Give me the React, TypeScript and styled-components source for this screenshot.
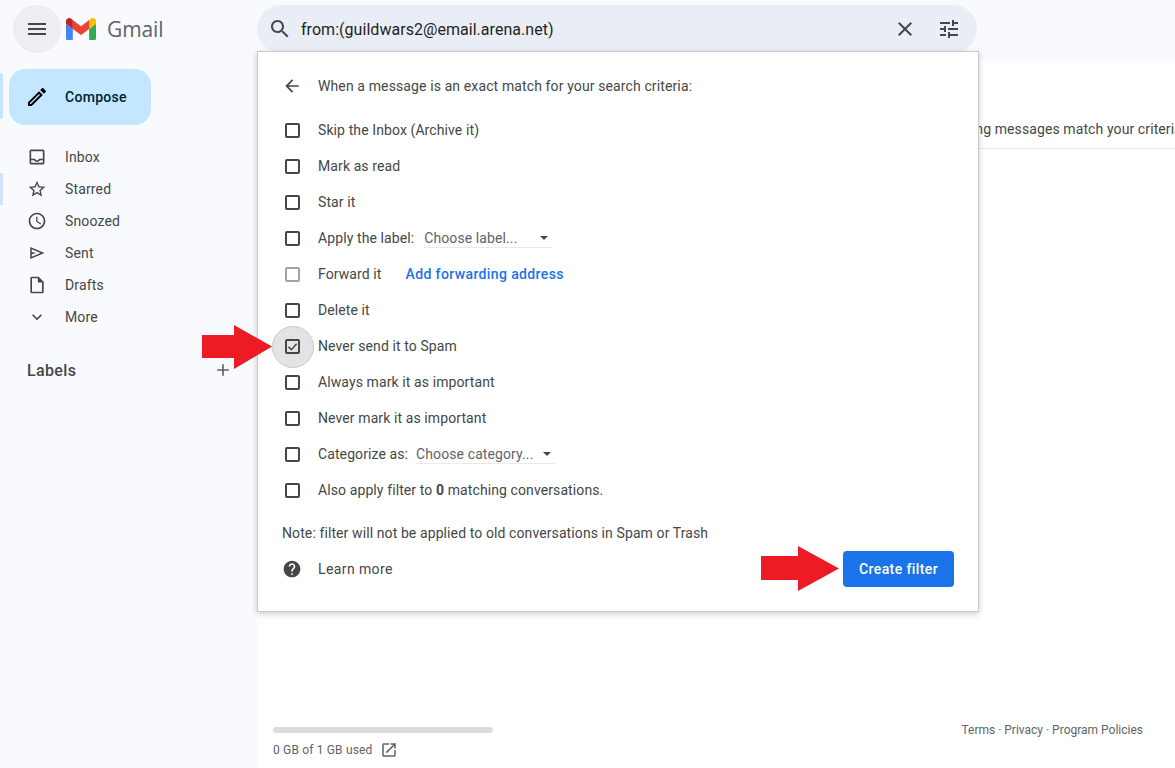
import React from "react";
import styled, { createGlobalStyle } from "styled-components";

const Global = createGlobalStyle`
  html, body { margin: 0; padding: 0; height: 100%; background: #f8fafd; }
  * { box-sizing: border-box; }
  body { font-family: Roboto, "Liberation Sans", Arial, sans-serif; font-size: 14px; letter-spacing: 0.1px; color: #444746; overflow: hidden; }
`;

const Page = styled.div`
  position: relative;
  width: 100%;
  height: 768px;
  display: flex;
  flex-direction: column;
  overflow: hidden;
  background: #f8fafd;
`;
const Header = styled.header`
  height: 61px;
  flex: none;
  display: flex;
  align-items: flex-start;
  padding: 5px 0 0 13px;
`;
const MenuButton = styled.div`
  width: 48px;
  height: 48px;
  border-radius: 50%;
  background: #eceef1;
  display: flex;
  align-items: center;
  justify-content: center;
  color: #444746;
`;
const Brand = styled.div`
  width: 196px;
  height: 48px;
  padding-left: 5px;
  display: flex;
  align-items: center;
  gap: 11px;
`;
const BrandName = styled.span`
  font-family: "Open Sans", Roboto, sans-serif;
  font-size: 21px;
  color: #5f6368;
  letter-spacing: -0.1px;
`;
const SearchBar = styled.div`
  width: 720px;
  height: 48px;
  border-radius: 24px;
  background: #e9eef6;
  display: flex;
  align-items: center;
  padding: 0 16px 0 11px;
  color: #444746;
`;
const SearchText = styled.span`
  flex: 1;
  margin-left: 9px;
  font-size: 16px;
  letter-spacing: 0.04px;
  color: #1f1f1f;
`;
const SearchAction = styled.span`
  width: 24px;
  height: 24px;
  margin-left: 20px;
  display: flex;
`;
const Body = styled.div`
  flex: 1;
  display: flex;
  min-height: 0;
`;
const Sidebar = styled.nav`
  position: relative;
  width: 257px;
  flex: none;
  padding-top: 8px;
`;
const ComposeButton = styled.div`
  position: relative;
  margin-left: 9px;
  width: 142px;
  height: 56px;
  border-radius: 16px;
  background: #c2e7ff;
  display: flex;
  align-items: center;
  padding-left: 16px;
  gap: 16px;
  font-weight: 500;
  letter-spacing: 0.3px;
  color: #001d35;
  &::before {
    content: "";
    position: absolute;
    left: -9px;
    top: 4px;
    width: 3px;
    height: 46px;
    border-radius: 0 3px 3px 0;
    background: #c2e7ff;
  }
`;
const NavList = styled.ul`
  list-style: none;
  margin: 16px 0 0;
  padding: 0;
`;
const NavItem = styled.li<{ $marked?: boolean }>`
  position: relative;
  height: 32px;
  display: flex;
  align-items: center;
  padding-left: 27px;
  gap: 18px;
  color: #444746;
  letter-spacing: 0.15px;
  ${(p) =>
    p.$marked
      ? `&::before { content: ""; position: absolute; left: 0; top: 0; width: 3px; height: 32px; background: #d3e3fd; }`
      : ""}
`;
const IconSlot = styled.span`
  width: 20px;
  height: 20px;
  flex: none;
  display: flex;
  align-items: center;
  justify-content: center;
`;
const LabelsHead = styled.div`
  margin-top: 21px;
  height: 32px;
  padding: 0 24px 0 27px;
  display: flex;
  align-items: center;
  justify-content: space-between;
  font-size: 16px;
  font-weight: 500;
  letter-spacing: 0.35px;
  color: #444746;
`;
const Main = styled.main`
  flex: 1;
  min-width: 0;
  background: #fff;
  display: flex;
  flex-direction: column;
`;
const MatchRow = styled.div`
  margin-top: 58px;
  height: 30px;
  padding-left: 663px;
  white-space: nowrap;
  overflow: hidden;
  line-height: 20px;
  color: #444746;
  border-bottom: 1px solid #e8eaed;
`;
const Footer = styled.footer`
  margin-top: auto;
  padding: 0 32px 8px 16px;
  display: flex;
  justify-content: space-between;
  align-items: flex-start;
  font-size: 12px;
  letter-spacing: 0;
  color: #5f6368;
`;
const Storage = styled.div`
  display: flex;
  flex-direction: column;
`;
const StorageBar = styled.div`
  width: 220px;
  height: 6px;
  border-radius: 3px;
  background: #dadce0;
`;
const StorageText = styled.div`
  margin-top: 7px;
  height: 20px;
  display: flex;
  align-items: center;
  gap: 7px;
  letter-spacing: 0.17px;
`;
const Links = styled.div`
  margin-top: -6px;
  line-height: 18px;
`;
const Popup = styled.section`
  position: absolute;
  z-index: 1;
  left: 257px;
  top: 51px;
  width: 722px;
  height: 561px;
  background: #fff;
  border: 1px solid #c8cacc;
  box-shadow: 0 2px 6px rgba(60, 64, 67, 0.25);
  padding: 16px 24px 0 24px;
`;
const PopupHead = styled.div`
  height: 36px;
  display: flex;
  align-items: center;
  gap: 16px;
  color: #444746;
  margin-bottom: 8px;
  letter-spacing: 0.12px;
`;
const Row = styled.div`
  height: 36px;
  display: flex;
  align-items: center;
  padding-left: 3px;
  gap: 18px;
  color: #444746;
`;
const Check = styled.span<{ $dim?: boolean; $on?: boolean }>`
  position: relative;
  flex: none;
  width: 15px;
  height: 15px;
  border: 2px solid ${(p) => (p.$dim ? "#a2a2a2" : "#444746")};
  border-radius: 2px;
  display: flex;
  align-items: center;
  justify-content: center;
  ${(p) =>
    p.$on
      ? `&::before { content: ""; position: absolute; left: -15px; top: -15px; width: 40px; height: 40px; border-radius: 50%; background: #e3e3e3; border: 1px solid #c9cacb; z-index: -1; }`
      : ""}
`;
const CheckMark = styled.svg`
  flex: none;
  width: 11px;
  height: 11px;
  fill: none;
  stroke: #444746;
  stroke-width: 3.4;
`;
const Inline = styled.span`
  display: flex;
  align-items: center;
`;
const Select = styled.span<{ $w: number; $ml: number }>`
  width: ${(p) => p.$w}px;
  margin-left: ${(p) => p.$ml}px;
  height: 19px;
  border-bottom: 1px solid #e8eaed;
  display: flex;
  align-items: center;
  justify-content: space-between;
  padding-right: 4px;
  line-height: 18px;
  color: #5f6368;
`;
const Caret = styled.span`
  width: 0;
  height: 0;
  border-left: 4px solid transparent;
  border-right: 4px solid transparent;
  border-top: 4px solid #444746;
`;
const ForwardLink = styled.span`
  margin-left: 24px;
  color: #1a73e8;
  font-weight: 500;
  letter-spacing: 0.38px;
`;
const Note = styled.div`
  margin-top: 15px;
  line-height: 20px;
  color: #444746;
`;
const PopupFoot = styled.div`
  margin-top: 8px;
  height: 36px;
  display: flex;
  align-items: center;
  gap: 16px;
  color: #5f6368;
`;
const LearnMore = styled.span`
  flex: 1;
  color: #444746;
  letter-spacing: 0.4px;
`;
const CreateButton = styled.span`
  width: 111px;
  height: 36px;
  border-radius: 4px;
  background: #1a73e8;
  color: #fff;
  font-weight: 500;
  letter-spacing: 0.4px;
  display: flex;
  align-items: center;
  justify-content: center;
`;
const Arrow = styled.svg<{ $x: number; $y: number }>`
  position: absolute;
  left: ${(p) => p.$x}px;
  top: ${(p) => p.$y}px;
  z-index: 5;
`;

const P = {
  search: "M15.5 14h-.79l-.28-.27C15.41 12.59 16 11.11 16 9.5 16 5.91 13.09 3 9.5 3S3 5.91 3 9.5 5.91 16 9.5 16c1.61 0 3.09-.59 4.23-1.57l.27.28v.79l5 4.99L20.49 19l-4.99-5zm-6 0C7.01 14 5 11.99 5 9.5S7.01 5 9.5 5 14 7.01 14 9.5 11.99 14 9.5 14z",
  close: "M19 6.41L17.59 5 12 10.59 6.41 5 5 6.41 10.59 12 5 17.59 6.41 19 12 13.41 17.59 19 19 17.59 13.41 12z",
  tune: "M3 17v2h6v-2H3zM3 5v2h10V5H3zm10 16v-2h8v-2h-8v-2h-2v6h2zM7 9v2H3v2h4v2h2V9H7zm14 4v-2H11v2h10zm-6-4h2V7h4V5h-4V3h-2v6z",
  menu: "M3 18h18v-2H3v2zm0-5h18v-2H3v2zm0-7v2h18V6H3z",
  inbox: "M19 3H5c-1.1 0-2 .9-2 2v14c0 1.1.9 2 2 2h14c1.1 0 2-.9 2-2V5c0-1.1-.9-2-2-2zm0 16H5v-3h3.56c.69 1.19 1.97 2 3.45 2s2.75-.81 3.45-2H19v3zm0-5h-4.99c0 1.1-.9 2-2 2s-2-.9-2-2H5V5h14v9z",
  star: "M22 9.24l-7.19-.62L12 2 9.19 8.63 2 9.24l5.46 4.73L5.82 21 12 17.27 18.18 21l-1.63-7.03L22 9.24zM12 15.4l-3.76 2.27 1-4.28-3.32-2.88 4.38-.38L12 6.1l1.71 4.04 4.38.38-3.32 2.88 1 4.28L12 15.4z",
  clock: "M11.99 2C6.47 2 2 6.48 2 12s4.47 10 9.99 10C17.52 22 22 17.52 22 12S17.52 2 11.99 2zM12 20c-4.42 0-8-3.58-8-8s3.58-8 8-8 8 3.58 8 8-3.58 8-8 8zm.5-13H11v6l5.25 3.15.75-1.23-4.5-2.67z",
  send: "M3 20V4l19 8-19 8zm2-3 11.85-5L5 7v3.5l6 1.5-6 1.5V17z",
  draft: "M14 2H6c-1.1 0-1.99.9-1.99 2L4 20c0 1.1.89 2 1.99 2H18c1.1 0 2-.9 2-2V8l-6-6zm4 18H6V4h7v5h5v11z",
  more: "M16.59 8.59L12 13.17 7.41 8.59 6 10l6 6 6-6z",
  add: "M19 13h-6v6h-2v-6H5v-2h6V5h2v6h6v2z",
  back: "M20 11H7.83l5.59-5.59L12 4l-8 8 8 8 1.41-1.41L7.83 13H20v-2z",
  help: "M12 2C6.48 2 2 6.48 2 12s4.48 10 10 10 10-4.48 10-10S17.52 2 12 2zm1 17h-2v-2h2v2zm2.07-7.75l-.9.92C13.45 12.9 13 13.5 13 15h-2v-.5c0-1.1.45-2.1 1.17-2.83l1.24-1.26c.37-.36.59-.86.59-1.41 0-1.1-.9-2-2-2s-2 .9-2 2H8c0-2.21 1.79-4 4-4s4 1.79 4 4c0 .88-.36 1.68-.93 2.25z",
  open: "M19 19H5V5h7V3H5c-1.11 0-2 .9-2 2v14c0 1.1.89 2 2 2h14c1.1 0 2-.9 2-2v-7h-2v7zM14 3v2h3.59l-9.83 9.83 1.41 1.41L19 6.41V10h2V3h-7z",
  edit: "M14.06 9.02l.92.92L5.92 19H5v-.92l9.06-9.06M17.66 3c-.25 0-.51.1-.7.29l-1.83 1.83 3.75 3.75 1.83-1.83c.39-.39.39-1.02 0-1.41l-2.34-2.34c-.2-.2-.45-.29-.71-.29zm-3.6 3.19L3 17.25V21h3.75L17.81 9.94l-3.75-3.75z",
};

const Icon = ({ d, size = 20, color = "currentColor" }: { d: string; size?: number; color?: string }) => (
  <svg width={size} height={size} viewBox="0 0 24 24" fill={color} style={{ flex: "none" }}>
    <path d={d} />
  </svg>
);

const GmailMark = () => (
  <svg width="30" height="22.5" viewBox="52 42 88 66" style={{ flex: "none" }}>
    <path fill="#4285f4" d="M58 108h14V74L52 59v43c0 3.32 2.69 6 6 6" />
    <path fill="#34a853" d="M120 108h14c3.32 0 6-2.69 6-6V59l-20 15" />
    <path fill="#fbbc04" d="M120 48v26l20-15v-8c0-7.42-8.47-11.65-14.4-7.2" />
    <path fill="#ea4335" d="M72 74V48l24 18 24-18v26L96 92" />
    <path fill="#c5221f" d="M52 51v8l20 15V48l-5.6-4.2c-5.94-4.45-14.4-.22-14.4 7.2" />
  </svg>
);

const nav = [
  { label: "Inbox", d: P.inbox, size: 20 },
  { label: "Starred", d: P.star, size: 20, marked: true },
  { label: "Snoozed", d: P.clock, size: 20 },
  { label: "Sent", d: P.send, size: 18 },
  { label: "Drafts", d: P.draft, size: 20 },
  { label: "More", d: P.more, size: 20 },
];

export default function App() {
  return (
    <Page>
      <Global />
      <Header>
        <MenuButton>
          <Icon d={P.menu} size={24} />
        </MenuButton>
        <Brand>
          <GmailMark />
          <BrandName>Gmail</BrandName>
        </Brand>
        <SearchBar>
          <Icon d={P.search} size={24} />
          <SearchText>from:(guildwars2@email.arena.net)</SearchText>
          <SearchAction>
            <Icon d={P.close} size={24} />
          </SearchAction>
          <SearchAction>
            <Icon d={P.tune} size={24} />
          </SearchAction>
        </SearchBar>
      </Header>
      <Body>
        <Sidebar>
          <ComposeButton>
            <Icon d={P.edit} size={24} color="#000" />
            Compose
          </ComposeButton>
          <NavList>
            {nav.map((n) => (
              <NavItem key={n.label} $marked={n.marked}>
                <IconSlot>
                  <Icon d={n.d} size={n.size} />
                </IconSlot>
                {n.label}
              </NavItem>
            ))}
          </NavList>
          <LabelsHead>
            Labels
            <Icon d={P.add} size={20} color="#5f6368" />
          </LabelsHead>
        </Sidebar>
        <Main>
          <MatchRow>No existing messages match your criteria.</MatchRow>
          <Footer>
            <Storage>
              <StorageBar />
              <StorageText>
                0 GB of 1 GB used
                <Icon d={P.open} size={18} />
              </StorageText>
            </Storage>
            <Links>Terms · Privacy · Program Policies</Links>
          </Footer>
        </Main>
      </Body>
      <Popup>
        <PopupHead>
          <Icon d={P.back} size={20} />
          When a message is an exact match for your search criteria:
        </PopupHead>
        <Row>
          <Check />
          Skip the Inbox (Archive it)
        </Row>
        <Row>
          <Check />
          Mark as read
        </Row>
        <Row>
          <Check />
          Star it
        </Row>
        <Row>
          <Check />
          <Inline>
            Apply the label:
            <Select $w={128} $ml={10}>
              Choose label...
              <Caret />
            </Select>
          </Inline>
        </Row>
        <Row>
          <Check $dim />
          <Inline>
            Forward it
            <ForwardLink>Add forwarding address</ForwardLink>
          </Inline>
        </Row>
        <Row>
          <Check />
          Delete it
        </Row>
        <Row>
          <Check $on>
            <CheckMark viewBox="0 0 24 24">
              <path d="M3 12.5l6.5 6.5L21 6" />
            </CheckMark>
          </Check>
          Never send it to Spam
        </Row>
        <Row>
          <Check />
          Always mark it as important
        </Row>
        <Row>
          <Check />
          Never mark it as important
        </Row>
        <Row>
          <Check />
          <Inline>
            Categorize as:
            <Select $w={139} $ml={8}>
              Choose category...
              <Caret />
            </Select>
          </Inline>
        </Row>
        <Row>
          <Check />
          <span>
            Also apply filter to <b>0</b> matching conversations.
          </span>
        </Row>
        <Note>Note: filter will not be applied to old conversations in Spam or Trash</Note>
        <PopupFoot>
          <Icon d={P.help} size={20} color="#444746" />
          <LearnMore>Learn more</LearnMore>
          <CreateButton>Create filter</CreateButton>
        </PopupFoot>
      </Popup>
      <Arrow $x={202} $y={325} width="71" height="45" viewBox="0 0 71 45">
        <path fill="#ed1c24" d="M0 10h32V0l38 21.5L32 44V33H0z" />
      </Arrow>
      <Arrow $x={761} $y={546} width="79" height="46" viewBox="0 0 79 46">
        <path fill="#ed1c24" d="M0 10h37V0l41 22.5L37 45V34H0z" />
      </Arrow>
    </Page>
  );
}
